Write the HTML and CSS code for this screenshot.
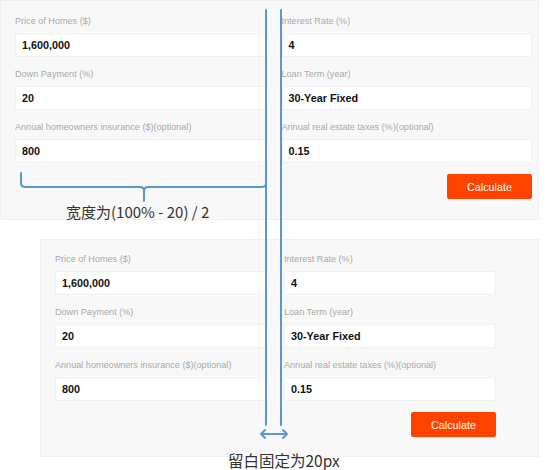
FILE: index.html
```html
<!DOCTYPE html>
<html>
<head>
<meta charset="utf-8">
<link rel="stylesheet" href="styles.css">
</head>
<body>
<div class="page">
  <section class="panel panel-top">
    <div class="grid">
      <div class="col">
        <div class="field"><div class="label">Price of Homes ($)</div><div class="input">1,600,000</div></div>
        <div class="field"><div class="label">Down Payment (%)</div><div class="input">20</div></div>
        <div class="field"><div class="label">Annual homeowners insurance ($)(optional)</div><div class="input">800</div></div>
      </div>
      <div class="col">
        <div class="field"><div class="label">Interest Rate (%)</div><div class="input">4</div></div>
        <div class="field"><div class="label">Loan Term (year)</div><div class="input">30-Year Fixed</div></div>
        <div class="field"><div class="label">Annual real estate taxes (%)(optional)</div><div class="input">0.15</div></div>
        <div class="actions"><button class="btn">Calculate</button></div>
      </div>
    </div>
  </section>
  <section class="panel panel-bottom">
    <div class="grid">
      <div class="col">
        <div class="field"><div class="label">Price of Homes ($)</div><div class="input">1,600,000</div></div>
        <div class="field"><div class="label">Down Payment (%)</div><div class="input">20</div></div>
        <div class="field"><div class="label">Annual homeowners insurance ($)(optional)</div><div class="input">800</div></div>
      </div>
      <div class="col">
        <div class="field"><div class="label">Interest Rate (%)</div><div class="input">4</div></div>
        <div class="field"><div class="label">Loan Term (year)</div><div class="input">30-Year Fixed</div></div>
        <div class="field"><div class="label">Annual real estate taxes (%)(optional)</div><div class="input">0.15</div></div>
        <div class="actions"><button class="btn">Calculate</button></div>
      </div>
    </div>
  </section>

  <svg class="overlay" width="550" height="470" viewBox="0 0 550 470">
    <g fill="none" stroke="#5b97d3" stroke-width="2" stroke-linecap="round" stroke-linejoin="round">
      <line x1="266" y1="10" x2="266" y2="425"/>
      <line x1="281" y1="10" x2="281" y2="425"/>
      <path d="M21 173 L21 183 Q21 187 25 187 L140 187 Q144 187 144 191 L144 201 M144 191 Q144 187 148 187 L262 187 Q266 187 266 183 L266 173"/>
      <path d="M261 434 L287 434 M265 430 L261 434 L265 438 M283 430 L287 434 L283 438"/>
    </g>
  </svg>
  <div class="note note-width">宽度为(100% - 20) / 2</div>
  <div class="note note-gap">留白固定为20px</div>
</div>
</body>
</html>
```

FILE: styles.css
```css
* { box-sizing: border-box; }
html, body { margin: 0; padding: 0; background: #ffffff; }
.page {
  position: relative;
  width: 550px;
  height: 470px;
  overflow: hidden;
  font-family: "Liberation Sans", Arial, sans-serif;
}
.panel {
  background: #f8f8f8;
  border: 1px solid #f0f0f0;
}
.panel-top {
  width: 539px;
  padding: 13px 6px 20px 14px;
  border-top-color: #eeeeee;
}
.panel-bottom {
  width: 499px;
  margin-left: 40px;
  margin-top: 19px;
  padding: 12px 42px 19px 14px;
}
.grid {
  display: grid;
  grid-template-columns: 1fr 1fr;
  column-gap: 16px;
}
.panel-bottom .grid { column-gap: 17px; }
.col { display: flex; flex-direction: column; }
.field { margin-bottom: 10px; }
.label {
  font-size: 9.1px;
  line-height: 14px;
  height: 14px;
  color: #a8a8a8;
  margin-bottom: 5px;
  white-space: nowrap;
}
.input {
  height: 24px;
  background: #ffffff;
  border: 1px solid #f0f0f0;
  border-radius: 2px;
  padding: 0 6px;
  font-size: 10.8px;
  font-weight: bold;
  line-height: 22px;
  color: #111111;
}
.actions {
  display: flex;
  justify-content: flex-end;
  margin-top: 1px;
}
.btn {
  width: 85px;
  height: 25px;
  border: none;
  border-radius: 2px;
  background: #ff4200;
  color: #ffffff;
  font-family: "Liberation Sans", Arial, sans-serif;
  font-size: 10.8px;
  padding: 0;
}
.overlay {
  position: absolute;
  left: 0;
  top: 0;
  pointer-events: none;
}
.note {
  position: absolute;
  font-family: "Noto Sans CJK SC", "Noto Sans", sans-serif;
  color: #333333;
  white-space: nowrap;
  line-height: 20px;
}
.note-width {
  left: 66px;
  top: 202px;
  font-size: 15px;
}
.note-gap {
  left: 228px;
  top: 450px;
  font-size: 15.5px;
}
```
